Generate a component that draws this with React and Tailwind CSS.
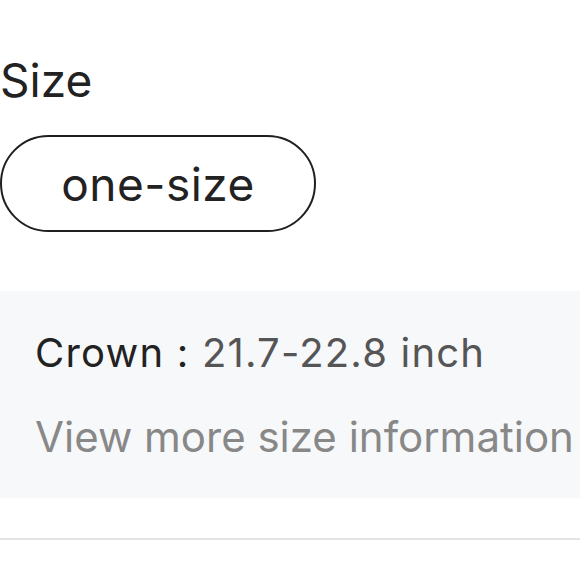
export default function App() {
  return (
    <div
      className="w-[580px] h-[580px] bg-white overflow-hidden"
      style={{ fontFamily: 'Inter, "Liberation Sans", sans-serif' }}
    >
      <div className="pt-[52px]">
        <h3 className="text-[46px] leading-[56px] text-[#222]">Size</h3>
        <div className="mt-[27px] flex">
          <button className="h-[97px] w-[316px] rounded-full border-2 border-[#1f1f1f] text-[46px] tracking-[0.5px] text-[#222] flex items-center justify-center pt-[2px]">
            one-size
          </button>
        </div>
        <div className="mt-[59px] h-[207px] bg-[#f7f8fa] px-[35px] pt-[37px]">
          <p className="text-[40px] leading-[50px] tracking-[1.2px] text-[#555] whitespace-nowrap">
            <span className="text-[#222]">Crown : </span>21.7-22.8 inch
          </p>
          <p className="mt-[34px] text-[42px] leading-[50px] text-[#888] whitespace-nowrap">
            View more size information
          </p>
        </div>
        <div className="mt-[40px] h-[2px] bg-[#e3e3e3]" />
      </div>
    </div>
  );
}
